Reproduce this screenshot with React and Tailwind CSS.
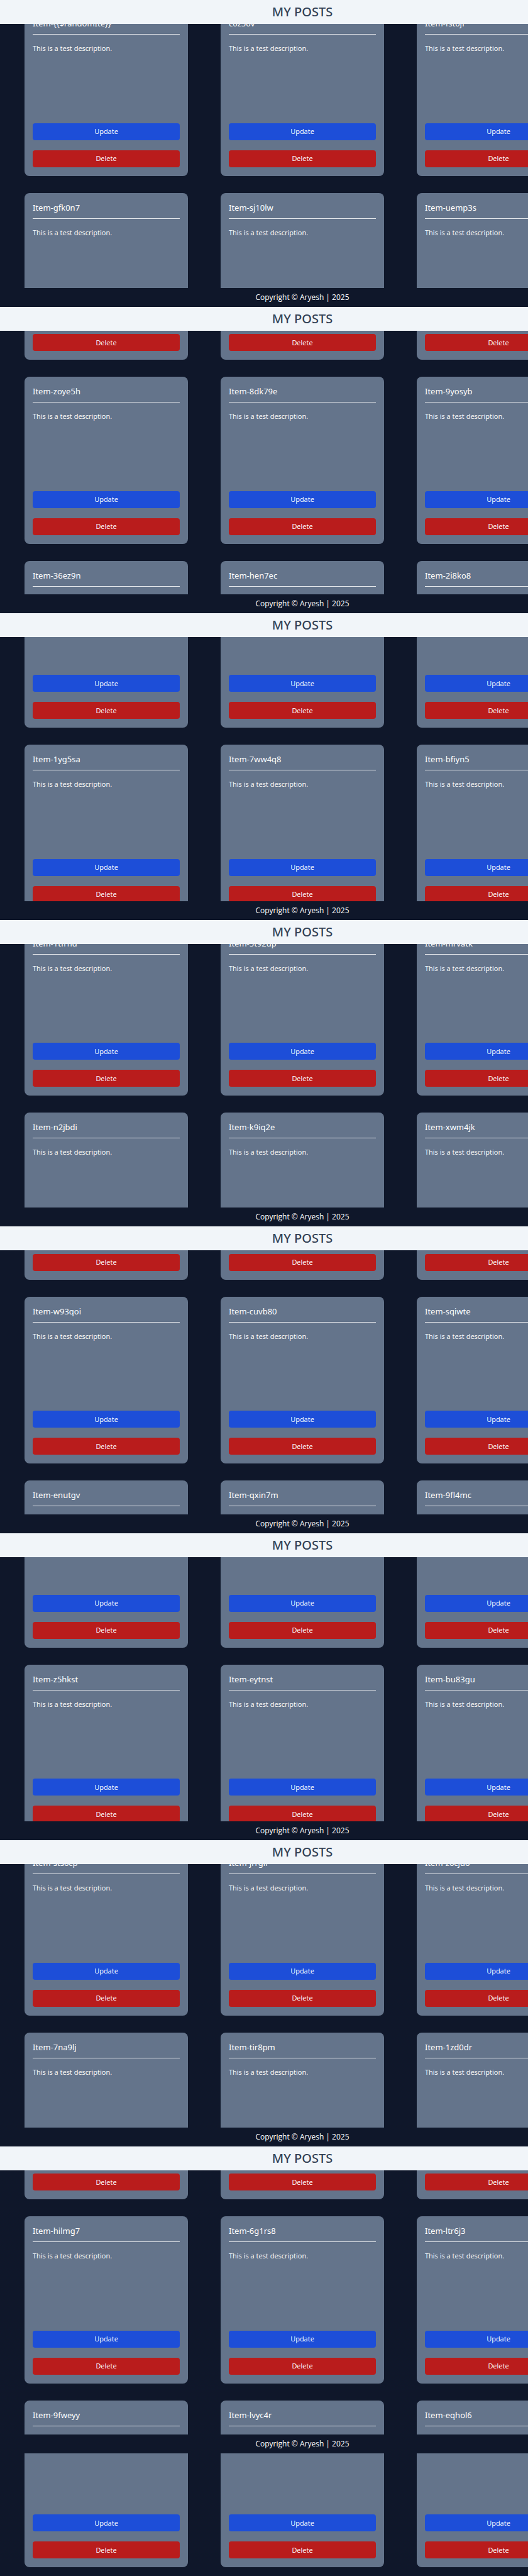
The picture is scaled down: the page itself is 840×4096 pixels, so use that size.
const rows = [
  ["Item-{{$randomIte}}", "c0z50v", "Item-fst0jf"],
  ["Item-gfk0n7", "Item-sj10lw", "Item-uemp3s"],
  ["Item-zoye5h", "Item-8dk79e", "Item-9yosyb"],
  ["Item-36ez9n", "Item-hen7ec", "Item-2i8ko8"],
  ["Item-1yg5sa", "Item-7ww4q8", "Item-bfiyn5"],
  ["Item-1tfrhd", "Item-5t92dp", "Item-mrvatk"],
  ["Item-n2jbdi", "Item-k9iq2e", "Item-xwm4jk"],
  ["Item-w93qoi", "Item-cuvb80", "Item-sqiwte"],
  ["Item-enutgv", "Item-qxin7m", "Item-9fl4mc"],
  ["Item-z5hkst", "Item-eytnst", "Item-bu83gu"],
  ["Item-sts6cp", "Item-jrrgif", "Item-z6cjd6"],
  ["Item-7na9lj", "Item-tir8pm", "Item-1zd0dr"],
  ["Item-hilmg7", "Item-6g1rs8", "Item-ltr6j3"],
  ["Item-9fweyy", "Item-lvyc4r", "Item-eqhol6"],
];

// The bars repeat every five rows over three screenfuls; parts that they
// cover completely are made invisible so that they cannot be focused.
const posts = rows.flatMap((titles, row) =>
  titles.map((title) => ({
    title,
    updateCovered: row % 5 === 1,
    descriptionCovered: row % 5 === 3,
  })),
);

function PostCard({ title, updateCovered, descriptionCovered }) {
  return (
    <article className="flex flex-col rounded-lg bg-[#64748b] px-[13px] pt-[14px] pb-[14px] text-white">
      <h2 className="border-b border-gray-200 pb-[7px] font-['Noto_Sans',sans-serif] text-[13px] leading-[19px]">
        {title}
      </h2>
      <p className={descriptionCovered ? "invisible mt-[14px] text-[11px] leading-4" : "mt-[14px] text-[11px] leading-4"}>
        This is a test description.
      </p>
      <div className="mt-auto flex flex-col gap-4 text-[11px] leading-4">
        <button
          type="button"
          className={updateCovered ? "invisible h-[27px] rounded bg-[#1d4ed8]" : "h-[27px] rounded bg-[#1d4ed8]"}
        >
          Update
        </button>
        <button type="button" className="h-[27px] rounded bg-[#b91c1c]">
          Delete
        </button>
      </div>
    </article>
  );
}

function Bars() {
  return (
    <div className="flex flex-col justify-between">
      <header className="flex h-[38px] items-center justify-center bg-[#f1f5f9] font-['Noto_Sans',sans-serif] text-xl font-medium text-[#334155]">
        MY POSTS
      </header>
      <footer className="flex h-[30px] items-center justify-center bg-[#0f172a] text-[12px] text-white">
        Copyright © Aryesh | 2025
      </footer>
    </div>
  );
}

export default function App() {
  return (
    <div className="flex min-h-screen flex-col overflow-hidden bg-[#0f172a] font-['Open_Sans',sans-serif]">
      <div className="relative flex min-w-[962px] flex-1 flex-col">
        <main className="grid flex-1 auto-rows-fr grid-cols-3 gap-x-[52px] gap-y-[27px] px-[39px] py-[14px]">
          {posts.map((post) => (
            <PostCard key={post.title} {...post} />
          ))}
        </main>
        <div className="pointer-events-none absolute inset-0 grid grid-rows-[repeat(8,5fr)_2fr]">
          {Array.from({ length: 8 }, (_, i) => (
            <Bars key={i} />
          ))}
        </div>
      </div>
    </div>
  );
}
